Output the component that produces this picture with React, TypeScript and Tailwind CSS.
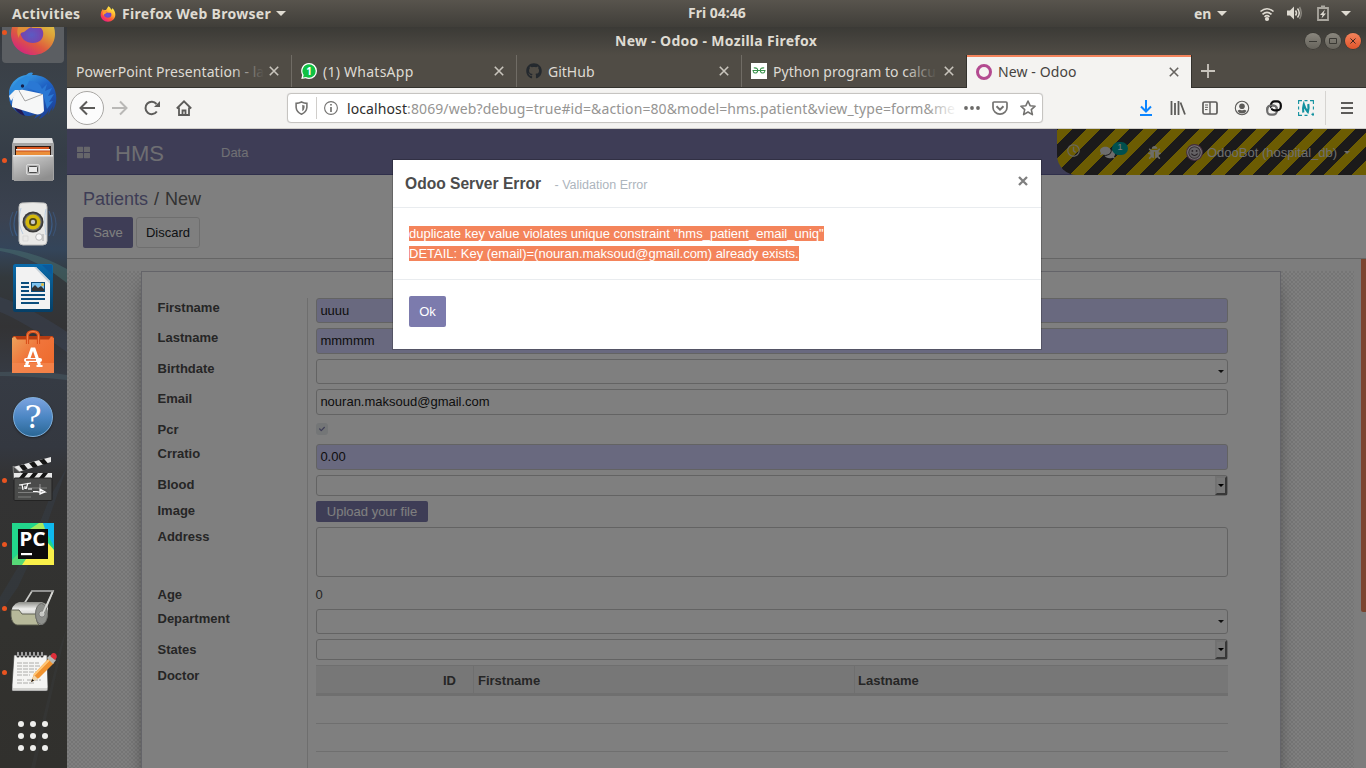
import type { ReactNode } from 'react';
import { FaThLarge, FaRegClock, FaComments, FaBug, FaGithub, FaCheck } from 'react-icons/fa';

/* ---------- application icons ---------- */

function FirefoxIcon({ className }: { className: string }) {
  return (
    <svg viewBox="0 0 48 48" className={className}>
      <defs>
        <linearGradient id="ffBody" x1="0.8" y1="0.1" x2="0.25" y2="1">
          <stop offset="0" stopColor="#fff04a" />
          <stop offset="0.35" stopColor="#ffb02e" />
          <stop offset="0.65" stopColor="#ff5a36" />
          <stop offset="1" stopColor="#f0148a" />
        </linearGradient>
        <radialGradient id="ffCore" cx="0.5" cy="0.6" r="0.6">
          <stop offset="0" stopColor="#5b5bdc" />
          <stop offset="1" stopColor="#8a35b8" />
        </radialGradient>
      </defs>
      <path d="M25 1c5 3 7 6 9 10 3-1 3-4 3-5 6 6 9 13 9 20 0 12-10 21-22 21S2 38 2 26C2 18 6 12 9 8c0 2 1 4 2 5 2-1 5-1 7-1 2-3 5-7 7-11z" fill="url(#ffBody)" />
      <path d="M13 15c5 0 8 2 10 5h9c3 3 3 8 0 12-4 4-12 4-17 0-5-5-5-12-2-17z" fill="url(#ffCore)" />
      <path d="M12 15c5-1 9 1 11 4-4 1-5 3-8 5-3 0-5 3-5 6-3-5-2-11 2-15z" fill="#ff9a2e" />
    </svg>
  );
}

function ThunderbirdIcon() {
  return (
    <svg viewBox="0 0 48 48" className="size-12">
      <defs>
        <linearGradient id="tbBody" x1="0.2" y1="0" x2="0.8" y2="1">
          <stop offset="0" stopColor="#3fa8ea" />
          <stop offset="0.45" stopColor="#1f62c4" />
          <stop offset="1" stopColor="#1c3f96" />
        </linearGradient>
      </defs>
      <path d="M0 19C2 9 10 4 17 3c3-3 6-3 7-2l-1 2c12-1 23 8 24 20 1 7-1 13-4 16l1-5-5 9 1-5c-3 5-7 8-10 9l3-5-8 5 3-5c-5 2-9 2-9 2C8 43 0 34 0 25z" fill="url(#tbBody)" />
      <path d="M3 30c2 7 6 12 13 14L10 34z" fill="#221a55" />
      <path d="M10 17l24 5 1 17c-2 3-6 4-9 3L3 35c0-8 2-14 7-18z" fill="#f6f7f7" />
      <path d="M9 17l7 12 18-7" fill="none" stroke="#9a9a9a" strokeWidth="0.9" />
      <path d="M13 13c6-7 17-4 20 4l5-5-2 7 7-3-4 8 6-2-5 8 4-1-6 8-4-15-15-6c-4-1-7 3-10 2z" fill="#2a78d4" />
      <path d="M5 14C8 8 13 6 17 4l5 1c-3 4-2 7-6 10-3 3-6 2-9 5l-6 8c0-5 1-10 4-14z" fill="#2c8bdd" />
      <circle cx="13.500" cy="14" r="1.700" fill="#16204d" />
      <path d="M0 24l6-6 4 0-8 11z" fill="#f3f3f3" />
    </svg>
  );
}

function FilesIcon() {
  return (
    <svg viewBox="0 0 48 48" className="size-12">
      <defs>
        <linearGradient id="fmFront" x1="0" y1="0" x2="0.6" y2="1">
          <stop offset="0" stopColor="#d4d4d4" />
          <stop offset="1" stopColor="#8f8f8f" />
        </linearGradient>
      </defs>
      <path d="M5 2h38l2 6v36H3V8z" fill="#a4a4a4" />
      <path d="M5 2h38l1 5H4z" fill="#dedede" />
      <rect x="6" y="10" width="36" height="11" fill="#2e1a12" />
      <rect x="8" y="11" width="32" height="3" fill="#d9541c" />
      <rect x="7" y="13" width="34" height="3" fill="#f3f0ea" />
      <rect x="7" y="15" width="34" height="5" fill="#eb8f3a" />
      <rect x="7" y="14.500" width="34" height="1" fill="#c9481a" />
      <path d="M4 19h40v26H5z" fill="url(#fmFront)" />
      <path d="M4 19h40v1.500H4z" fill="#ececec" />
      <rect x="17.500" y="28.500" width="13" height="10" rx="1.500" fill="#b5b5b5" stroke="#d9d9d9" />
      <rect x="19.500" y="30.500" width="9" height="6" rx="1" fill="#e8e8e8" stroke="#4a4a4a" />
    </svg>
  );
}

function RhythmboxIcon() {
  return (
    <svg viewBox="0 0 48 48" className="size-12">
      <g fill="none" stroke="#3e6798" strokeWidth="1.200">
        <path d="M4 12c-4 8-4 16 0 24M44 12c4 8 4 16 0 24" opacity="0.45" />
        <path d="M8 11c-4 8-4 18 0 25M40 11c4 8 4 18 0 25" opacity="0.7" />
      </g>
      <path d="M13 3q11-1 22 0 3 0 3 4v34q0 4-4 4H14q-4 0-4-4V7q0-4 3-4z" fill="#e9e9e7" stroke="#bdbdbb" />
      <circle cx="24" cy="22" r="10.500" fill="#3a3a3a" />
      <circle cx="24" cy="22" r="8.700" fill="#6f6f6c" />
      <circle cx="24" cy="22" r="7.600" fill="#d5b90b" />
      <circle cx="24" cy="22" r="4" fill="#514819" />
      <circle cx="24" cy="22" r="2.200" fill="#c8c8c8" />
      <circle cx="30" cy="37" r="3.300" fill="#f8f8f8" stroke="#bbb" />
      <path d="M34 34v7" stroke="#bbb" strokeWidth="1.500" />
      <path d="M14 36h5v5h-5z" fill="none" stroke="#d4d4d2" strokeWidth="0.700" />
      <path d="M12 8c-3 10-2 18 2 26M37 9c-2 8-1 20 0 26" fill="none" stroke="#adc4dd" strokeWidth="0.800" />
    </svg>
  );
}

function WriterIcon() {
  return (
    <svg viewBox="0 0 48 48" className="size-12">
      <defs>
        <linearGradient id="lwEdge" x1="0" y1="0" x2="0" y2="1">
          <stop offset="0" stopColor="#0a6bab" />
          <stop offset="1" stopColor="#063f66" />
        </linearGradient>
      </defs>
      <rect x="4" y="0" width="40" height="48" rx="2.500" fill="url(#lwEdge)" />
      <path d="M7 3h20l14 14v28H7z" fill="#f2f2f2" />
      <path d="M27 3l14 14v3L25 3z" fill="#c9d2d9" />
      <path d="M33 1h10v10z" fill="#0a5a9c" />
      <g fill="#0b4d7c">
        <rect x="12" y="18" width="8" height="2" />
        <rect x="12" y="22" width="8" height="2" />
        <rect x="12" y="26" width="8" height="2" />
        <rect x="12" y="30" width="24" height="2" />
        <rect x="12" y="34" width="24" height="2" />
        <rect x="12" y="38" width="18" height="2" />
      </g>
      <rect x="22.500" y="18.500" width="13" height="9" fill="#7ec3ee" stroke="#0b4d7c" />
      <path d="M23 27v-3l3-3 3 3 3-2 3 3v2z" fill="#343434" />
      <circle cx="33.500" cy="20.500" r="1.500" fill="#e3bd3c" />
    </svg>
  );
}

function SoftwareIcon() {
  return (
    <svg viewBox="0 0 48 48" className="size-12">
      <defs>
        <linearGradient id="swBag" x1="0" y1="0" x2="1" y2="0.8">
          <stop offset="0" stopColor="#eda35c" />
          <stop offset="0.5" stopColor="#f0743a" />
          <stop offset="1" stopColor="#ee6a2c" />
        </linearGradient>
      </defs>
      <path d="M4 8h40l1 4H3z" fill="#b53c12" />
      <path d="M3 10l3-1.500 2 3h32l2-3 3 1.500v35H3z" fill="url(#swBag)" />
      <path d="M3 35h42v10H3z" fill="#f58a52" opacity="0.7" />
      <path d="M18.500 16V8q0-4.500 5.500-4.500T29.500 8v8" fill="none" stroke="#d9511b" strokeWidth="3.200" />
      <path d="M18.500 16V8q0-4.500 5.500-4.500T29.500 8v8" fill="none" stroke="#f2824a" strokeWidth="1" />
      <path d="M17.500 37l5.500-16h2l5.500 16" fill="none" stroke="#fff" strokeWidth="3.200" />
      <path d="M15 38h6M27.500 38h6" stroke="#fff" strokeWidth="2" />
      <rect x="15" y="30" width="18" height="4" rx="2" fill="#fff" />
      <rect x="17" y="31.200" width="10" height="1.500" fill="#e9642c" />
    </svg>
  );
}

function HelpIcon() {
  return (
    <div className="mt-0.5 size-10 rounded-full border border-[#7fb0dc] bg-linear-to-b from-[#7ba3e0] via-[#4c87c4] to-[#2a6795] text-center font-['DejaVu_Serif','Liberation_Serif',serif] text-[32px] leading-[38px] text-white shadow-[0_1px_2px_#1118]">
      ?
    </div>
  );
}

function ClapperIcon() {
  return (
    <svg viewBox="0 0 48 48" className="size-12">
      <path d="M4 11L42 1v5L6 17z" fill="#e9e9e9" />
      <path d="M10 9.500l5-1.300 4 5-5 1.300zM20 7l5-1.500 4 5-5 1.300zM30 4.300l5-1.500 4 4.800-5 1.200z" fill="#151515" />
      <path d="M4 10l9 8-8 6z" fill="#4b4b4b" stroke="#999" strokeWidth="0.600" />
      <rect x="5" y="17" width="38" height="5" fill="#e9e9e9" />
      <path d="M14 17h5l-4 5h-5zM24 17h5l-4 5h-5zM34 17h5l-4 5h-5z" fill="#151515" />
      <rect x="5" y="22" width="38" height="22.500" rx="1" fill="#4a4b4a" stroke="#232323" />
      <path d="M9 32h29M9 36.500h29M9 41h13" stroke="#848684" strokeWidth="0.900" />
      <path d="M10 29l12-2M13 28l1 6M16 30v3M19 27l-2 6M19 33h4M24 35.500h4l2 .5h4M31 33l5 3-5 2z" fill="none" stroke="#fff" strokeWidth="1.200" />
      <path d="M31 28v4" stroke="#b9b9b9" strokeWidth="0.700" />
    </svg>
  );
}

function PyCharmIcon() {
  return (
    <svg viewBox="0 0 48 48" className="size-12">
      <rect x="3" y="3" width="42" height="42" fill="#22d68c" />
      <path d="M33 3h12v24z" fill="#0fb9ee" />
      <path d="M21 9L30 3h4l4 12-10 10z" fill="#a6e95e" />
      <path d="M3 40l20-20 12 2-15 23H3z" fill="#56d977" />
      <path d="M13 45l20-30 6 8 6 7v15z" fill="#f9f04a" />
      <rect x="9" y="9" width="30" height="30" fill="#0c0c0c" />
      <text x="10.200" y="26" className="font-['Open_Sans',sans-serif] text-[20px] font-bold" textLength="26.500" lengthAdjust="spacingAndGlyphs" fill="#fff">PC</text>
      <rect x="12" y="33" width="11" height="2.200" fill="#fff" />
    </svg>
  );
}

function RollerIcon() {
  return (
    <svg viewBox="0 0 48 48" className="size-12">
      <defs>
        <linearGradient id="rlDrum" x1="0" y1="0" x2="0" y2="1">
          <stop offset="0" stopColor="#8e8f8a" />
          <stop offset="0.3" stopColor="#eeeeec" />
          <stop offset="1" stopColor="#9a9b95" />
        </linearGradient>
      </defs>
      <g transform="translate(0 3)">
        <path d="M15 17L23 4h21L34 28" fill="none" stroke="#c9cac7" strokeWidth="1.700" />
        <path d="M22 4h22" stroke="#777" strokeWidth="0.800" />
        <path d="M10 15h23q7 2 6 11-1 9-6 12H8q-5-1-6-9 0-12 8-14z" fill="url(#rlDrum)" />
        <path d="M2 23h8l3 4h14q0 8 3 11H8q-5-1-6-9z" fill="#b7b99a" stroke="#55574a" strokeWidth="0.900" />
        <ellipse cx="32.500" cy="27" rx="6" ry="10.500" fill="#8e908c" stroke="#6c6d6a" />
        <circle cx="33" cy="27" r="3" fill="#c7c8c5" stroke="#666" strokeWidth="0.600" />
        <path d="M34 26L43.500 5" stroke="#d7d8d5" strokeWidth="1.700" />
      </g>
    </svg>
  );
}

function NotesIcon() {
  return (
    <svg viewBox="0 0 48 48" className="size-12">
      <g transform="translate(0 -2)">
        <path d="M5 9h33l1 32q0 3-1 4H3V39z" fill="#f5f5f3" stroke="#3b3b39" strokeWidth="0.700" />
        <path d="M4 42h34v2H4z" fill="#d3d3d0" />
        <path d="M9 10V6.500M13 10V6.500M17 10V6.500M21 10V6.500M25 10V6.500M29 10V6.500M33 10V6.500" stroke="#2d2d2d" strokeWidth="3" strokeLinecap="round" />
        <path d="M9 9.500v-3M13 9.500v-3M17 9.500v-3M21 9.500v-3M25 9.500v-3M29 9.500v-3M33 9.500v-3" stroke="#ddd" strokeWidth="1.300" strokeLinecap="round" />
        <path d="M8 17h22M8 20h24M8 23h20M8 26h20M8 29h13M8 34h7M18 34h14M8 37h18" stroke="#a5a5a2" strokeWidth="0.900" strokeDasharray="5 1" />
        <path d="M22 36l3-8 15-16 5 5-15 15z" fill="#f0922e" />
        <path d="M25 29l15-15" stroke="#ffc777" strokeWidth="2" />
        <path d="M22 36l3-7 4 4z" fill="#f0d6ab" />
        <path d="M22 36l1.300-3 1.800 1.700z" fill="#111" />
        <path d="M38 12l3-3 6 5-3 4z" fill="#b6b8b5" />
        <path d="M42 9c2-4 7-1.500 5.500 3l-1.500 2-4.500-3.500z" fill="#de2f3a" />
      </g>
    </svg>
  );
}

function AppGridIcon() {
  return (
    <div className="grid grid-cols-3 gap-1.5">
      {[0, 1, 2, 3, 4, 5, 6, 7, 8].map((i) => (
        <span key={i} className="size-1.5 rounded-full bg-[#eeeeec]" />
      ))}
    </div>
  );
}

/* ---------- dock ---------- */

const dockItems: { name: string; icon: ReactNode; running?: boolean; active?: boolean }[] = [
  { name: 'firefox', icon: <FirefoxIcon className="size-12" />, running: true, active: true },
  { name: 'mail', icon: <ThunderbirdIcon /> },
  { name: 'files', icon: <FilesIcon />, running: true },
  { name: 'music', icon: <RhythmboxIcon /> },
  { name: 'writer', icon: <WriterIcon /> },
  { name: 'software', icon: <SoftwareIcon /> },
  { name: 'help', icon: <HelpIcon /> },
  { name: 'video', icon: <ClapperIcon />, running: true },
  { name: 'pycharm', icon: <PyCharmIcon />, running: true },
  { name: 'roller', icon: <RollerIcon />, running: true },
  { name: 'notes', icon: <NotesIcon />, running: true },
  { name: 'apps', icon: <AppGridIcon /> },
];

function Dock() {
  return (
    <aside className="relative w-[67px] shrink-0 overflow-hidden bg-[linear-gradient(#35383b_0,#3a3f46_30px,#3b444c_80px,#353d47_130px,#3b4250_190px,#34455a_222px,#33393d_250px,#333335_300px,#363b44_350px,#343840_420px,#333334_450px,#32322f_600px,#31302d_741px)]">
      <svg className="absolute inset-0 h-full w-full" viewBox="0 0 67 741" preserveAspectRatio="none">
        <path d="M0 221Q35 224 67 242V256Q35 230 0 224z" fill="#47706f" opacity="0.5" />
        <path d="M0 345Q40 343 67 348V353Q30 349 0 349z" fill="#55707a" opacity="0.3" />
        <path d="M0 270Q30 280 67 305V325Q25 295 0 285z" fill="#3f4c66" opacity="0.3" />
        <path d="M67 440L46 500 18 560 0 586V570L30 520 50 470z" fill="#38465c" opacity="0.25" />
        <path d="M67 600L35 741H31L60 620z" fill="#3b3f43" opacity="0.3" />
      </svg>
      <div className="relative -mt-[27px] flex flex-col">
        {dockItems.map((item) => (
          <div key={item.name} className="relative flex h-16 w-[66px] items-center justify-center">
            {item.active && <span className="absolute inset-x-0.5 inset-y-px rounded bg-[#5b5e62]" />}
            {item.running && <span className="absolute left-0.5 size-[5px] rounded-full bg-[#e95420]" />}
            <span className={item.active ? 'relative flex opacity-80' : 'relative flex'}>{item.icon}</span>
          </div>
        ))}
      </div>
    </aside>
  );
}

/* ---------- desktop bar ---------- */

function Caret({ className }: { className: string }) {
  return (
    <svg viewBox="0 0 10 5" className={className}>
      <path d="M0 0h10L5 5z" fill="currentColor" />
    </svg>
  );
}

function TopBar() {
  return (
    <header className="flex h-[27px] shrink-0 items-center bg-linear-to-b from-[#58544d] to-[#403e39] font-['Noto_Sans',sans-serif] text-[14px] font-bold text-[#dfdbd2]">
      <span className="ml-3 w-[88px] whitespace-nowrap tracking-[0.35px]">Activities</span>
      <FirefoxIcon className="size-4" />
      <span className="ml-1.5 w-[150px] whitespace-nowrap tracking-[0.3px]">Firefox Web Browser</span>
      <Caret className="ml-1 h-[5px] w-2.5" />
      <span className="-mt-0.5 ml-[402px] w-[60px] whitespace-nowrap">Fri 04:46</span>
      <span className="ml-[446px] w-[18px] whitespace-nowrap">en</span>
      <Caret className="ml-[5px] h-[5px] w-2.5" />
      <svg viewBox="0 0 16 16" className="ml-[32px] size-4" fill="none" stroke="currentColor" strokeWidth="1.600">
        <path d="M1.500 5.500Q8 0 14.500 5.500" />
        <path d="M3.500 8.300Q8 4.300 12.500 8.300" />
        <path d="M5.500 10.800Q8 8.500 10.500 10.800" />
        <circle cx="8" cy="13" r="1.300" fill="currentColor" />
      </svg>
      <svg viewBox="0 0 16 16" className="-mt-0.5 ml-[11px] size-4" fill="none" stroke="currentColor" strokeWidth="1.500">
        <path d="M1 5.500h3l4-4v13l-4-4H1z" fill="currentColor" stroke="none" />
        <path d="M9.500 5.500q2 2.500 0 5M11.500 3.500q3.500 4.500 0 9" />
        <path d="M13.500 2q3.500 6 0 12" opacity="0.4" />
      </svg>
      <svg viewBox="0 0 12 16" className="-mt-0.5 ml-[15px] h-4 w-3">
        <path d="M4 1.500h4M1 3h10v12H1z" fill="none" stroke="#aaa79f" strokeWidth="1.800" />
        <path d="M8 4.500L3 10h2.500l-1 3.500L9 8.500H6.500z" fill="currentColor" />
      </svg>
      <Caret className="ml-3 h-[5px] w-2.5" />
    </header>
  );
}

/* ---------- browser chrome ---------- */

function CloseX({ className }: { className: string }) {
  return (
    <svg viewBox="0 0 10 10" className={className}>
      <path d="M0.800 0.800l8.400 8.400M9.200 0.800L0.800 9.200" stroke="currentColor" strokeWidth="1.600" />
    </svg>
  );
}

function TitleBar() {
  return (
    <div className="flex h-[28px] shrink-0 items-center bg-linear-to-b from-[#3b3a36] to-[#504c45] font-['Noto_Sans',sans-serif] text-[14px] font-bold text-[#dfdbd2]">
      <span className="-mt-0.5 ml-[548px] w-[205px] whitespace-nowrap tracking-[0.3px]">New - Odoo - Mozilla Firefox</span>
      <div className="ml-auto mr-[5px] flex gap-1">
        <span className="flex size-4 items-center justify-center rounded-full bg-linear-to-b from-[#8a877e] to-[#66635b] text-[#3a3934] shadow-[0_0_0_0.5px_#33322e]">
          <svg viewBox="0 0 8 8" className="size-2"><path d="M0 4.500h8" stroke="currentColor" /></svg>
        </span>
        <span className="flex size-4 items-center justify-center rounded-full bg-linear-to-b from-[#8a877e] to-[#66635b] text-[#3a3934] shadow-[0_0_0_0.5px_#33322e]">
          <svg viewBox="0 0 8 6" className="h-1.5 w-2"><path d="M0.500 0.500h7v5h-7z" fill="none" stroke="currentColor" /></svg>
        </span>
        <span className="flex size-4 items-center justify-center rounded-full bg-linear-to-b from-[#f3835b] to-[#e2542a] text-[#3a2520] shadow-[0_0_0_0.5px_#33322e]">
          <CloseX className="size-1.5" />
        </span>
      </div>
    </div>
  );
}

function WhatsAppFavicon() {
  return (
    <svg viewBox="0 0 16 16" className="size-4">
      <path d="M8 0a8 8 0 110 16 8 8 0 01-3.500-.8L0.300 16l.9-4A8 8 0 018 0z" fill="#fff" />
      <path d="M8 1.300A6.700 6.700 0 118 14.700a7 7 0 01-3-.8L2 14.400l.7-2.500A6.700 6.700 0 018 1.300z" fill="#10c143" />
      <text x="5.200" y="11.600" className="font-['Noto_Sans',sans-serif] text-[10px] font-bold" fill="#fff">1</text>
    </svg>
  );
}

function GeeksFavicon() {
  return (
    <svg viewBox="0 0 16 16" className="size-4">
      <rect width="16" height="16" fill="#fff" />
      <path d="M1.500 7.500h13M6 5.500Q4.500 4.500 2.800 5M10 5.500q1.500-1 3.200-.5M6.500 5.500v3q-.7 1.700-2.500 1.500-1.700-.2-2-2.500M9.500 5.500v3q.7 1.700 2.500 1.500 1.700-.2 2-2.500" fill="none" stroke="#39914b" strokeWidth="1.100" />
    </svg>
  );
}

function TabBar() {
  return (
    <div className="relative flex h-[33px] shrink-0 border-b border-[#33322d] bg-[#504c45] font-['Noto_Sans',sans-serif] text-[14px] text-[#dedad3]">
      <div className="flex w-[225px] items-center border-r border-[#706c65] pl-[9px] pr-3">
        <span className="relative w-[188px] whitespace-nowrap tracking-[0.07px]">
          PowerPoint Presentation - la
          <span className="absolute inset-y-0 right-0 w-8 bg-linear-to-r from-transparent to-[#504c45]" />
        </span>
        <CloseX className="ml-auto size-2.5 text-[#c9c5bd]" />
      </div>
      <div className="flex w-[225px] items-center border-r border-[#706c65] pl-[9px] pr-3">
        <WhatsAppFavicon />
        <span className="ml-1.5 whitespace-nowrap tracking-[0.25px]">(1) WhatsApp</span>
        <CloseX className="ml-auto size-2.5 text-[#c9c5bd]" />
      </div>
      <div className="flex w-[225px] items-center border-r border-[#706c65] pl-[9px] pr-3">
        <FaGithub className="size-4 text-[#24292e]" />
        <span className="ml-1.5">GitHub</span>
        <CloseX className="ml-auto size-2.5 text-[#c9c5bd]" />
      </div>
      <div className="flex w-[225px] items-center pl-[9px] pr-[13px]">
        <GeeksFavicon />
        <span className="relative ml-1.5 w-[164px] whitespace-nowrap tracking-[0.04px]">
          Python program to calcu
          <span className="absolute inset-y-0 right-0 w-8 bg-linear-to-r from-transparent to-[#504c45]" />
        </span>
        <CloseX className="ml-auto size-2.5 text-[#c9c5bd]" />
      </div>
      <div className="-mb-px flex w-[224px] items-center border-t-2 border-[#f4845c] bg-[#f4f3f1] pb-[2px] pl-[9px] pr-3 text-[#46433f] shadow-[1px_0_0_#33322d,-1px_0_0_#33322d]">
        <span className="size-4 rounded-full border-[3.5px] border-[#b34a90]" />
        <span className="-mt-px ml-1.5 whitespace-nowrap tracking-[0.1px]">New - Odoo</span>
        <CloseX className="ml-auto size-2.5 text-[#66635f]" />
      </div>
      <svg viewBox="0 0 14 14" className="ml-2.5 mt-[9px] size-3.5">
        <path d="M7 0v14M0 7h14" stroke="#c9c5bd" strokeWidth="1.800" />
      </svg>
    </div>
  );
}

function NavToolbar() {
  return (
    <div className="flex h-[41px] shrink-0 items-center border-b border-[#cfcdca] bg-[#f4f3f1] text-[#5c5b59]">
      <span className="ml-[3px] flex size-[34px] items-center justify-center rounded-full border border-[#a9a7a4] bg-[#fcfcfc]">
        <svg viewBox="0 0 16 16" className="size-4" fill="none" stroke="currentColor" strokeWidth="2"><path d="M16 8H1.500M8 1.500L1.500 8 8 14.500" /></svg>
      </span>
      <svg viewBox="0 0 16 16" className="ml-2 size-4 text-[#b9b8b6]" fill="none" stroke="currentColor" strokeWidth="2"><path d="M0 8h14.500M8 1.500L14.500 8 8 14.500" /></svg>
      <svg viewBox="0 0 16 16" className="ml-4 size-4" fill="none" stroke="currentColor" strokeWidth="2">
        <path d="M12.800 11.500A6.200 6.200 0 1112.500 4" />
        <path d="M16 1v6h-6z" fill="currentColor" stroke="none" />
      </svg>
      <svg viewBox="0 0 16 16" className="ml-4 size-4" fill="none" stroke="currentColor" strokeWidth="1.800">
        <path d="M0.800 8.500L8 1.300l7.200 7.200M3 7.500V15h10V7.500" />
        <path d="M6.500 15v-4.500h3V15" />
      </svg>
      <div className="ml-[95px] flex h-[30px] w-[756px] items-center rounded border border-[#c6c4c1] bg-white shadow-[0_0_1px_#ccc]">
        <svg viewBox="0 0 14 15" className="ml-[7px] h-[14px] w-[13px] text-[#737270]">
          <path d="M7 1q3 1.500 5.800 1.500V7q-.5 5-5.800 7.200Q1.700 12 1.200 7V2.500Q4 2.500 7 1z" fill="none" stroke="currentColor" strokeWidth="1.700" />
          <path d="M7.800 4q1.300.7 2.500.8V7q-.3 2.800-2.500 4z" fill="currentColor" />
        </svg>
        <span className="ml-[8px] h-[22px] w-px bg-[#d0cecb]" />
        <svg viewBox="0 0 14 14" className="ml-[7px] size-3.5 text-[#737270]">
          <circle cx="7" cy="7" r="6.400" fill="none" stroke="currentColor" strokeWidth="1.100" />
          <path d="M7 6v5M7 3v1.600" stroke="currentColor" strokeWidth="1.700" />
        </svg>
        <span className="relative ml-[9px] w-[611px] whitespace-nowrap font-['Noto_Sans',sans-serif] text-[14px] tracking-[0.1px] text-[#969593]">
          <span className="text-[#2e2d2b]">localhost</span>:8069/web?debug=true#id=&amp;action=80&amp;model=hms.patient&amp;view_type=form&amp;me
          <span className="absolute inset-y-0 right-0 w-8 bg-linear-to-r from-transparent to-white" />
        </span>
        <svg viewBox="0 0 16 4" className="ml-1.5 h-1 w-4"><g fill="#6b6a68"><circle cx="2" cy="2" r="1.900" /><circle cx="8" cy="2" r="1.900" /><circle cx="14" cy="2" r="1.900" /></g></svg>
        <svg viewBox="0 0 16 16" className="ml-3 size-4 text-[#737270]" fill="none" stroke="currentColor" strokeWidth="1.700">
          <path d="M2 2h12q1 0 1 1v4.500a7 6.700 0 01-14 0V3q0-1 1-1z" />
          <path d="M4.500 6.300L8 9.700l3.500-3.400" strokeWidth="2" />
        </svg>
        <svg viewBox="0 0 16 16" className="ml-3 size-4 text-[#737270]" fill="none" stroke="currentColor" strokeWidth="1.600" strokeLinejoin="round">
          <path d="M8 1l2.100 4.700 5 .5-3.800 3.400 1.100 5L8 12l-4.400 2.600 1.100-5L.9 6.200l5-.5z" />
        </svg>
      </div>
      <div className="ml-[95px] flex gap-4">
        <svg viewBox="0 0 16 16" className="size-4" fill="none" stroke="#0a84ff" strokeWidth="2"><path d="M8 0v11M3 6.500l5 5 5-5M2 15h12" /></svg>
        <svg viewBox="0 0 16 16" className="size-4" fill="none" stroke="currentColor" strokeWidth="1.800"><path d="M1.500 1v14M5 3v12M8.500 1v14M10.500 2.500l4.500 12" /></svg>
        <svg viewBox="0 0 16 16" className="size-4" fill="none" stroke="currentColor" strokeWidth="1.700">
          <rect x="1" y="2" width="14" height="12" rx="1.500" />
          <path d="M8 2v12" strokeWidth="1.400" />
          <path d="M3 5h3M3 7.300h3M3 9.600h2.500" strokeWidth="1" />
        </svg>
        <svg viewBox="0 0 16 16" className="size-4">
          <circle cx="8" cy="8" r="6.700" fill="none" stroke="currentColor" strokeWidth="1.100" />
          <circle cx="8" cy="6.300" r="2.800" fill="currentColor" />
          <path d="M3.500 11q1-1.200 2.500-1.300 2 1.200 4 0 1.500.1 2.500 1.300-1.700 2.500-4.500 2.500T3.500 11z" fill="currentColor" />
        </svg>
        <svg viewBox="0 0 16 16" className="size-4" fill="none" strokeWidth="2.200">
          <rect x="1.200" y="5.500" width="9.600" height="9.200" rx="3.600" stroke="#6e6e6e" />
          <rect x="5" y="1.400" width="9.800" height="9" rx="3.600" stroke="#0c0c0d" />
          <path d="M4 10.500q0-3.500 3.500-3.500h2" stroke="#f4f3f1" strokeWidth="0.800" />
          <path d="M1.200 10q0-4 4-4.500 5.500-.4 5.600 3" stroke="#6e6e6e" strokeWidth="2" />
        </svg>
        <svg viewBox="0 0 16 16" className="size-4" fill="none" stroke="#12919f">
          <path d="M0.600 4V0.600H4M6.500 0.600h3M12 0.600h3.400V4M15.400 6.500v3M0.600 6.500v3M0.600 12v3.400H4M6.500 15.400h3M15 12.800v3.200M13.400 14.400h2.600" strokeWidth="1.100" />
          <path d="M5.300 12.500q-.7-4 .5-8 1.500 5 4 7.500 1.200-4 .5-8" strokeWidth="2.200" />
        </svg>
      </div>
      <span className="ml-[11px] h-[34px] w-px bg-[#d6d4d1]" />
      <svg viewBox="0 0 12 12" className="ml-[15px] size-3"><path d="M0 1h12M0 6h12M0 11h12" stroke="currentColor" strokeWidth="2" /></svg>
    </div>
  );
}

/* ---------- Odoo page ---------- */

function OdooNavbar() {
  return (
    <nav className="flex h-[46px] shrink-0 items-center border-b border-[#5f5e97] bg-[#7c7bad] text-[13px] text-[#e0e0e8]">
      <FaThLarge className="ml-2.5 mt-px size-[13px] text-[#ccccd4]" />
      <span className="ml-[25px] mt-[3px] w-[50px] text-[22px] text-[#dddde4]">HMS</span>
      <span className="ml-[56px] mt-[3px]">Data</span>
      <div className="-mb-px ml-auto flex h-[46px] w-[309px] items-center rounded-bl-[20px] bg-[repeating-linear-gradient(-45deg,#d9b904_0_10px,#373435_10px_20px)] text-[#dedede]">
        <FaRegClock className="-mt-1 ml-[10px] size-[13px] shrink-0 text-[#d0ccbc]" />
        <span className="relative ml-5 flex shrink-0">
          <FaComments className="size-[15px] text-[#dadada]" />
          <span className="absolute -top-[3px] left-3 flex h-[13px] w-4 items-center justify-center rounded-full bg-[#00a09d] text-[9px] text-white">1</span>
        </span>
        <FaBug className="ml-[33px] size-[13px] shrink-0 text-[#dcdacc]" />
        <svg viewBox="0 0 16 16" className="ml-[25px] size-[17px] shrink-0">
          <circle cx="8" cy="8" r="7.400" fill="#f4f0f4" stroke="#875a7b" />
          <circle cx="8" cy="8" r="5.400" fill="#c9c3c9" stroke="#6c6069" />
          <path d="M5 9q3 3.500 6 0" fill="none" stroke="#4c4049" />
          <circle cx="6" cy="6.500" r="0.900" fill="#4c4049" /><circle cx="10" cy="6.500" r="0.900" fill="#4c4049" />
        </svg>
        <span className="ml-1 mt-0.5 whitespace-nowrap">OdooBot (hospital_db)</span>
        <Caret className="ml-[7px] h-[3px] w-1.5" />
      </div>
    </nav>
  );
}

function TextBox({ value, required, caret, tall }: { value?: string; required?: boolean; caret?: boolean; tall?: boolean }) {
  return (
    <div className={(required ? 'bg-[#d2d2ff] ' : 'bg-white ') + (tall ? 'h-[26px] ' : 'h-[25px] ') + 'flex w-full rounded-[3px] border border-[#c6c6c6] pl-[3.4px] pr-1 text-[13px] leading-[23px] text-[#202020]'}>
      <span>{value}</span>
      {caret && <Caret className="-mr-1 ml-auto h-[3px] w-1.5 -translate-x-[3px] self-center" />}
    </div>
  );
}

function SelectBox() {
  return (
    <div className="flex h-[21px] w-full justify-end rounded-[3px] border border-[#c6c6c6] bg-white">
      <span className="flex w-3 items-center justify-center border-2 border-t-[#e4e4e4] border-r-[#707070] border-b-[#707070] border-l-[#e4e4e4] bg-[#efefef] text-black">
        <Caret className="h-[3px] w-1.5 shrink-0" />
      </span>
    </div>
  );
}

const formRows: { label: string; height: string; field: ReactNode }[] = [
  { label: 'Firstname', height: 'h-[30px] leading-[19px]', field: <TextBox value="uuuu" required /> },
  { label: 'Lastname', height: 'h-[31px] leading-[19px]', field: <TextBox value="mmmmm" required tall /> },
  { label: 'Birthdate', height: 'h-[30px] leading-[19px]', field: <TextBox caret /> },
  { label: 'Email', height: 'h-[31px] leading-[19px]', field: <TextBox value="nouran.maksoud@gmail.com" tall /> },
  {
    label: 'Pcr',
    height: 'h-[24px] leading-[19px]',
    field: (
      <span className="mt-[3px] flex size-3 items-center justify-center rounded-[3px] bg-[#e9ecef]">
        <FaCheck className="size-1.5 text-[#7c7bad]" />
      </span>
    ),
  },
  { label: 'Crratio', height: 'h-[31px] leading-[19px]', field: <TextBox value="0.00" required tall /> },
  { label: 'Blood', height: 'h-[26px] leading-[19px]', field: <SelectBox /> },
  {
    label: 'Image',
    height: 'h-[26px] leading-[19px]',
    field: <button className="h-[21px] w-28 rounded-[2px] bg-[#7c7bad] text-[13px] text-white">Upload your file</button>,
  },
  {
    label: 'Address',
    height: 'h-[58px] leading-[19px]',
    field: <div className="h-[50px] w-full rounded-[3px] border border-[#c6c6c6] bg-white" />,
  },
  { label: 'Age', height: 'h-[24px] leading-[19px]', field: <span className="-ml-[0.4px] text-[13px] text-[#4c4c4c]">0</span> },
  { label: 'Department', height: 'h-[30px] leading-[19px]', field: <TextBox caret /> },
  { label: 'States', height: 'h-[26px] leading-[21px]', field: <SelectBox /> },
];

function DoctorTable() {
  return (
    <div className="w-full text-[13px] font-bold leading-[19px] text-[#4c4c4c]">
      <div className="flex h-[31px] border-t border-b-[3px] border-[#dfdfdf] bg-[#eeeeee]">
        <span className="w-[158px] border-r border-[#dfdfdf] pr-[17px] pt-[5px] text-right">ID</span>
        <span className="w-[381px] border-r border-[#dfdfdf] pl-1 pt-[5px]">Firstname</span>
        <span className="pl-[3px] pt-[5px]">Lastname</span>
      </div>
      <div className="h-7 border-b border-[#dfdfdf]" />
      <div className="h-7 border-b border-[#dfdfdf]" />
    </div>
  );
}

function PatientForm() {
  return (
    <div className="flex min-h-0 flex-1 justify-between bg-[#fafafa]">
      <div className="mt-3 flex w-[1287px] overflow-hidden bg-[#fff] bg-[conic-gradient(#ebebeb_25%,#ffffff_0_50%,#ebebeb_0_75%,#ffffff_0)] bg-size-[4px_4px] pl-[74px]">
        <div className="h-[600px] w-[1140px] border border-[#c8c8d3] bg-white pl-[15px] pt-[26px] shadow-[0_5px_20px_-10px_#000]">
          <div className="relative flex flex-col">
            <span className="absolute left-[150px] top-0 h-[600px] w-px bg-[#dddddd]" />
            {formRows.map((row) => (
              <div key={row.label} className={'flex ' + row.height}>
                <span className="w-[159px] pl-[0.5px] text-[13px] font-bold leading-[inherit] text-[#4c4c4c]">{row.label}</span>
                <div className="flex w-[912px] items-start">{row.field}</div>
              </div>
            ))}
            <div className="flex">
              <span className="w-[159px] pl-[0.5px] pt-px text-[13px] font-bold leading-5 text-[#4c4c4c]">Doctor</span>
              <div className="w-[912px]"><DoctorTable /></div>
            </div>
          </div>
        </div>
      </div>
      <span className="h-[353px] w-[5px] rounded-bl-[2px] bg-[#f4895f]" />
    </div>
  );
}

function ErrorDialog() {
  return (
    <div className="absolute inset-0 z-10 bg-black/50">
      <div className="ml-[325px] mt-[30px] flex h-[191px] w-[650px] flex-col border border-black/20 bg-white bg-clip-padding">
        <div className="flex h-12 shrink-0 items-center border-b border-[#e9ecef] px-3">
          <h4 className="text-[15.6px] font-bold text-[#4c4c4c]">Odoo Server Error</h4>
          <span className="ml-[13.5px] mt-[4px] text-[12.5px] text-[#adb5bd]">- Validation Error</span>
          <svg viewBox="0 0 10 10" className="-mt-1.5 ml-auto mr-px size-2.5"><path d="M1 1l8 8M9 1L1 9" stroke="#7f7f7f" strokeWidth="2.300" /></svg>
        </div>
        <div className="h-[72px] shrink-0 border-b border-[#e9ecef] px-4 pt-4 text-[13px] leading-5 text-white">
          <p><span className="bg-[#f4845b]">duplicate key value violates unique constraint "hms_patient_email_uniq"</span></p>
          <p><span className="bg-[#f4845b]">DETAIL: Key (email)=(nouran.maksoud@gmail.com) already exists.</span></p>
        </div>
        <div className="p-4">
          <button className="h-[31px] w-[37px] rounded-[2px] bg-[#7c7bad] text-[13px] text-white">Ok</button>
        </div>
      </div>
    </div>
  );
}

function OdooPage() {
  return (
    <main className="relative flex min-h-0 flex-1 flex-col bg-white font-['Liberation_Sans',Arial,sans-serif]">
      <OdooNavbar />
      <section className="h-[84px] shrink-0 border-b border-[#cacaca] pl-4 pt-[11px]">
        <h1 className="text-[18px] leading-[26px] text-[#666666]">
          <span className="text-[#7c7bad]">Patients</span>
          <span className="px-[6px]">/</span>New
        </h1>
        <div className="mt-[5px] flex gap-[3px] text-[13px]">
          <button className="h-[31px] w-[50px] rounded-[2px] bg-[#7c7bad] text-white">Save</button>
          <button className="h-[31px] w-16 rounded-[3px] border border-[#dddddd] bg-white text-[#212529]">Discard</button>
        </div>
      </section>
      <PatientForm />
      <ErrorDialog />
    </main>
  );
}

export default function App() {
  return (
    <div className="flex h-[768px] w-[1366px] flex-col overflow-hidden">
      <TopBar />
      <div className="flex min-h-0 flex-1">
        <Dock />
        <div className="flex min-w-0 flex-1 flex-col">
          <TitleBar />
          <TabBar />
          <NavToolbar />
          <OdooPage />
        </div>
      </div>
    </div>
  );
}
